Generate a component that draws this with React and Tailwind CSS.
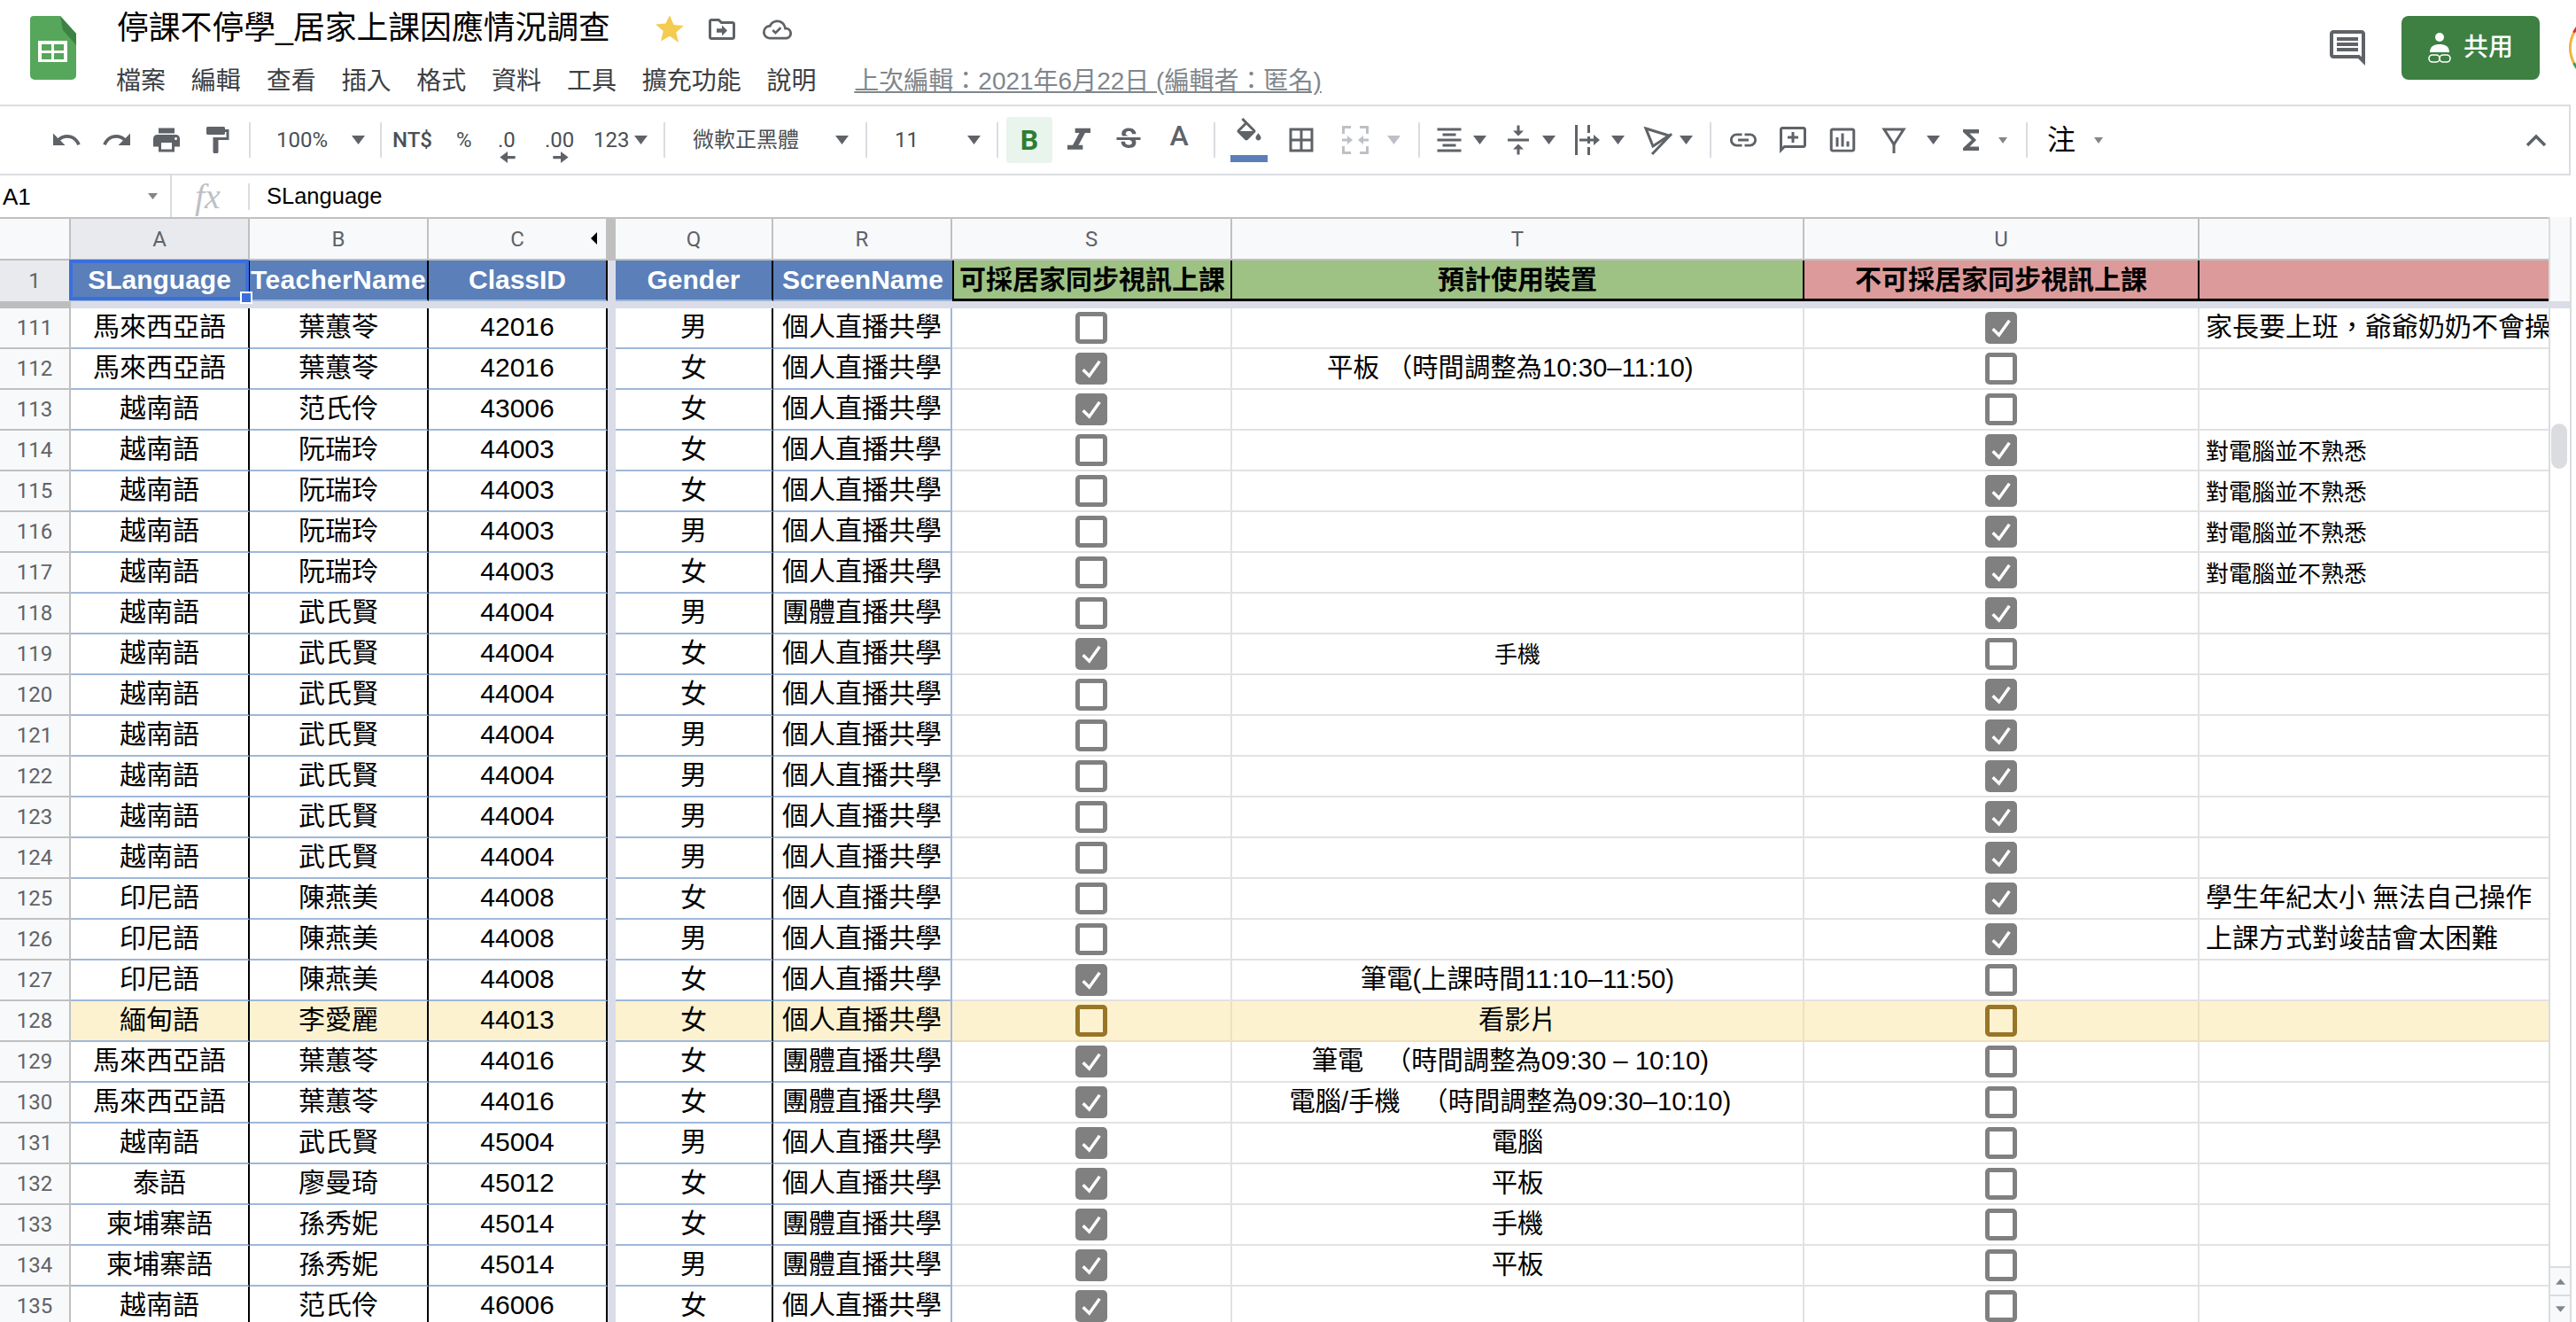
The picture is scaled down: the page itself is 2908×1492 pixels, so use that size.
import React from "react";

const G = "#5f6368";
const Icon = ({ d, size = "w-[36px] h-[36px]", fill = G }) => (
  <svg viewBox="0 0 24 24" className={`${size} shrink-0`} fill={fill}><path d={d} /></svg>
);
const P = {
  undo: "M12.5 8c-2.65 0-5.05.99-6.9 2.6L2 7v9h9l-3.62-3.62c1.39-1.16 3.16-1.88 5.12-1.88 3.54 0 6.55 2.31 7.6 5.5l2.37-.78C21.08 11.03 17.15 8 12.5 8z",
  redo: "M18.4 10.6C16.55 8.99 14.15 8 11.5 8c-4.65 0-8.58 3.03-9.96 7.22L3.9 16c1.05-3.19 4.05-5.5 7.6-5.5 1.95 0 3.73.72 5.12 1.88L13 16h9V7l-3.6 3.6z",
  print: "M19 8H5c-1.66 0-3 1.34-3 3v6h4v4h12v-4h4v-6c0-1.66-1.34-3-3-3zm-3 11H8v-5h8v5zm3-7c-.55 0-1-.45-1-1s.45-1 1-1 1 .45 1 1-.45 1-1 1zm-1-9H6v4h12V3z",
  paint: "M18 4V3c0-.55-.45-1-1-1H5c-.55 0-1 .45-1 1v4c0 .55.45 1 1 1h12c.55 0 1-.45 1-1V6h1v4H9v11c0 .55.45 1 1 1h2c.55 0 1-.45 1-1v-9h8V4h-3z",
  italic: "M10 4v3h2.21l-3.42 8H6v3h8v-3h-2.21l3.42-8H18V4z",
  fill: "M16.56 8.94L7.62 0 6.21 1.41l2.38 2.38-5.15 5.15c-.59.59-.59 1.54 0 2.12l5.5 5.5c.29.29.68.44 1.06.44s.77-.15 1.06-.44l5.5-5.5c.59-.58.59-1.53 0-2.12zM5.21 10L10 5.21 14.79 10H5.21zM19 11.5s-2 2.17-2 3.5c0 1.1.9 2 2 2s2-.9 2-2c0-1.33-2-3.5-2-3.5z",
  borders: "M3 3v18h18V3H3zm8 16H5v-6h6v6zm0-8H5V5h6v6zm8 8h-6v-6h6v6zm0-8h-6V5h6v6z",
  align: "M7 15v2h10v-2H7zm-4 6h18v-2H3v2zm0-8h18v-2H3v2zm4-6v2h10V7H7zM3 3v2h18V3H3z",
  valign: "M8 19h3v4h2v-4h3l-4-4-4 4zm8-14h-3V1h-2v4H8l4 4 4-4zM4 11v2h16v-2H4z",
  link: "M3.9 12c0-1.71 1.39-3.1 3.1-3.1h4V7H7c-2.76 0-5 2.24-5 5s2.24 5 5 5h4v-1.9H7c-1.71 0-3.1-1.39-3.1-3.1zM8 13h8v-2H8v2zm9-6h-4v1.9h4c1.71 0 3.1 1.39 3.1 3.1s-1.39 3.1-3.1 3.1h-4V17h4c2.76 0 5-2.24 5-5s-2.24-5-5-5z",
  cadd: "M20 2H4c-1.1 0-2 .9-2 2v18l4-4h14c1.1 0 2-.9 2-2V4c0-1.1-.9-2-2-2zm0 14H5.17L4 17.17V4h16v12zM11 14h2v-3h3V9h-3V6h-2v3H8v2h3z",
  chart: "M9 17H7v-7h2v7zm4 0h-2V7h2v10zm4 0h-2v-4h2v4zm2.5 2.1h-15V5h15v14.1zm0-16.1h-15c-1.1 0-2 .9-2 2v14c0 1.1.9 2 2 2h15c1.1 0 2-.9 2-2V5c0-1.1-.9-2-2-2z",
  sigma: "M18 4H6v2l6.5 6L6 18v2h12v-3h-7l5-5-5-5h7z",
  chat: "M22 4c0-1.1-.9-2-2-2H4c-1.1 0-2 .9-2 2v12c0 1.1.9 2 2 2h14l4 4V4zm-2 13.17L18.83 16H4V4h16v13.17zM6 12h12v2H6zm0-3h12v2H6zm0-3h12v2H6z",
  strike: "M7.24 8.75c-.26-.48-.39-1.03-.39-1.67 0-.61.13-1.16.4-1.67.26-.5.63-.93 1.11-1.29.48-.35 1.05-.63 1.7-.83.66-.19 1.39-.29 2.18-.29.81 0 1.54.11 2.21.34.66.22 1.23.54 1.69.94.47.4.83.88 1.08 1.43.25.55.38 1.15.38 1.81h-3.01c0-.31-.05-.59-.15-.85-.09-.27-.24-.49-.44-.68-.2-.19-.45-.33-.75-.44-.3-.1-.66-.16-1.06-.16-.39 0-.74.04-1.03.13-.29.09-.53.21-.72.36-.19.16-.34.34-.44.55-.1.21-.15.43-.15.66 0 .48.25.88.74 1.21.38.25.77.48 1.41.7H7.39c-.05-.08-.11-.17-.15-.25zM21 12v-2H3v2h9.62c.18.07.4.14.55.2.37.17.66.34.87.51.21.17.35.36.43.57.07.2.11.43.11.69 0 .23-.05.45-.14.66-.09.2-.23.38-.42.53-.19.15-.42.26-.71.35-.29.08-.63.13-1.01.13-.43 0-.83-.04-1.18-.13s-.66-.23-.91-.42c-.25-.19-.45-.44-.59-.75-.14-.31-.25-.76-.25-1.21H6.4c0 .55.08 1.13.24 1.58.16.45.37.85.65 1.21.28.35.6.66.98.92.37.26.78.48 1.22.65.44.17.9.3 1.38.39.48.08.96.13 1.44.13.8 0 1.53-.09 2.18-.28s1.21-.45 1.67-.79c.46-.34.82-.77 1.07-1.27s.38-1.07.38-1.71c0-.6-.1-1.14-.31-1.61-.05-.11-.11-.23-.17-.33H21z",
};

const Caret = ({ cls = "w-[15px] h-[10px]", fill = G }) => (
  <svg viewBox="0 0 10 6" preserveAspectRatio="none" className={`${cls} shrink-0`} fill={fill}><polygon points="0,0 10,0 5,6" /></svg>
);
const Sep = ({ ml }) => <div className={`${ml} w-[2px] h-[40px] shrink-0 bg-[#dadce0]`} />;

const Wrapped = ({ ml }) => (
  <svg viewBox="0 0 36 36" className={`${ml} w-[36px] h-[36px] shrink-0`} fill={G}>
    <rect x="4" y="1" width="3" height="34" />
    <rect x="18" y="1" width="3" height="9" /><rect x="18" y="14" width="3" height="8" /><rect x="18" y="26" width="3" height="9" />
    <rect x="9" y="16.5" width="16" height="3" /><polygon points="25,12 32,18 25,24" />
  </svg>
);
const Rotate = ({ ml }) => (
  <svg viewBox="0 0 36 36" className={`${ml} w-[36px] h-[36px] shrink-0`} fill="none" stroke={G} strokeWidth="3">
    <polygon points="4,5 30,13 12,25" /><line x1="33" y1="11" x2="11" y2="34" />
  </svg>
);
const Merge = ({ ml }) => (
  <svg viewBox="0 0 36 36" className={`${ml} w-[36px] h-[36px] shrink-0`} fill="#bdc1c6">
    <path d="M3 2h10v3H6v6H3zM23 2h10v9h-3V5h-7zM3 25h3v6h7v3H3zM30 25h3v9H23v-3h7z" />
    <path d="M3 16.5h6V13l6 5-6 5v-3.5H3zM33 16.5h-6V13l-6 5 6 5v-3.5h6z" />
  </svg>
);
const Funnel = ({ ml }) => (
  <svg viewBox="0 0 36 36" className={`${ml} w-[36px] h-[36px] shrink-0`} fill="none" stroke={G} strokeWidth="3">
    <polygon points="7,6 29,6 18,23" /><line x1="18" y1="22" x2="18" y2="33" />
  </svg>
);
const Arrow = ({ right }) => (
  <svg viewBox="0 0 16 12" className="absolute left-1/2 -translate-x-1/2 top-[25px] w-[18px] h-[13px]" fill={G}>
    {right ? <polygon points="0,4.5 8,4.5 8,0 16,6 8,12 8,7.5 0,7.5" /> : <polygon points="16,4.5 8,4.5 8,0 0,6 8,12 8,7.5 16,7.5" />}
  </svg>
);

function TopBar() {
  const menus = ["檔案", "編輯", "查看", "插入", "格式", "資料", "工具", "擴充功能", "說明"];
  return (
    <header className="h-[118px] flex shrink-0 pl-[34px] pt-[18px]">
      <svg viewBox="0 0 52 72" className="w-[52px] h-[72px] shrink-0">
        <path d="M4 0h30l18 20v47a5 5 0 0 1-5 5H5a5 5 0 0 1-5-5V4a4 4 0 0 1 4-4z" fill="#56a65c" />
        <path d="M34 0L52 20V33L37 16z" fill="#3d8144" />
        <path d="M9 28h33v24H9zM13 32h11v7H13zM27 32h11v7H27zM13 42h11v7H13zM27 42h11v7H27z" fill="#fff" fillRule="evenodd" />
      </svg>
      <div className="ml-[45px] flex flex-col">
        <div className="flex items-center h-[38px] -mt-[4px] text-[35.8px] leading-none text-black">
          <span className="ml-[1px]">停課不停學_居家上課因應情況調查</span>
          <svg viewBox="0 0 24 24" className="ml-[48px] w-[38px] h-[38px] shrink-0" fill="#f5cb50"><path d="M12 2l2.9 6.9 7.1.6-5.4 4.7 1.7 7.3L12 16.9l-6.3 3.6 1.7-7.3L2 8.5l7.1-.6z" /></svg>
          <svg viewBox="0 0 24 24" className="ml-[22px] w-[36px] h-[36px] shrink-0" fill={G}><path d="M20 6h-8l-2-2H4c-1.1 0-2 .9-2 2v12c0 1.1.9 2 2 2h16c1.1 0 2-.9 2-2V8c0-1.1-.9-2-2-2zm0 12H4V6h5.17l2 2H20v10zm-8-1l4-4-4-4v2.5H8v3h4z" /></svg>
          <svg viewBox="0 0 24 24" className="ml-[28px] w-[33px] h-[33px] shrink-0" fill={G}><path d="M19.35 10.04A7.49 7.49 0 0 0 12 4C9.11 4 6.6 5.64 5.35 8.04A5.994 5.994 0 0 0 0 14c0 3.31 2.69 6 6 6h13c2.76 0 5-2.24 5-5 0-2.64-2.05-4.78-4.65-4.96zM19 18H6c-2.21 0-4-1.79-4-4 0-2.05 1.53-3.76 3.56-3.97l1.07-.11.5-.95A5.469 5.469 0 0 1 12 6c2.62 0 4.88 1.86 5.39 4.43l.3 1.5 1.53.11A2.98 2.98 0 0 1 22 15c0 1.65-1.35 3-3 3zm-8.5-2l-3-3 1.4-1.4 1.6 1.6 3.6-3.6 1.4 1.4z" /></svg>
        </div>
        <div className="mt-[25px] flex items-center text-[28px] leading-none text-[#3c4043] h-[30px]">
          {menus.map((m) => (
            <span key={m} className="mr-[28.8px]">{m}</span>
          ))}
          <span className="ml-[14px] text-[28px] text-[#80868b] underline">上次編輯：2021年6月22日 (編輯者：匿名)</span>
        </div>
      </div>
      <div className="ml-auto flex items-start shrink-0">
        <Icon d={P.chat} size="w-[48px] h-[48px] mt-[12px]" />
        <div className="ml-[37px] w-[156px] h-[72px] rounded-[8px] bg-[#3e7f42] flex items-center justify-center text-white text-[28px] font-medium">
          <svg viewBox="0 0 26 34" className="w-[26px] h-[34px] mr-[14px] shrink-0">
            <circle cx="13" cy="5" r="5" fill="#fff" />
            <path d="M2 22c0-7 5-9 11-9s11 2 11 9z" fill="#fff" />
            <g fill="none" stroke="#fff" strokeWidth="1.6"><rect x="1" y="25" width="12" height="8" rx="4" /><rect x="13" y="25" width="12" height="8" rx="4" /></g>
          </svg>
          <span>共用</span>
        </div>
        <div className="ml-[33px] w-[8px] h-[80px] -mt-[4px] overflow-hidden shrink-0">
          <svg viewBox="0 0 80 80" className="w-[80px] h-[80px] max-w-none" fill="none" strokeWidth="3">
            <path d="M9.9 16A38.5 38.5 0 0 0 5.5 23" stroke="#d93025" />
            <path d="M5.5 23A38.5 38.5 0 0 0 5.5 57" stroke="#f0b441" />
            <path d="M5.5 57A38.5 38.5 0 0 0 9.9 64" stroke="#3f9a57" />
          </svg>
        </div>
      </div>
    </header>
  );
}

function Toolbar() {
  const txt = "shrink-0 leading-none text-[24px] text-[#4b4f54] font-['Roboto','Noto_Sans_CJK_TC',sans-serif] whitespace-nowrap";
  return (
    <div className="w-[2902px] h-[80px] shrink-0 border-y-2 border-r-2 border-[#dadce0] flex items-center pl-[57px]">
      <Icon d={P.undo} />
      <div className="ml-[21px]"><Icon d={P.redo} /></div>
      <div className="ml-[20px]"><Icon d={P.print} /></div>
      <div className="ml-[21px]"><Icon d={P.paint} /></div>
      <Sep ml="ml-[18px]" />
      <span className={`${txt} ml-[29px] w-[58px]`}>100%</span>
      <div className="ml-[27px]"><Caret /></div>
      <Sep ml="ml-[17px]" />
      <span className={`${txt} ml-[12px] w-[47px] font-medium`}>NT$</span>
      <span className={`${txt} ml-[25px] w-[20px]`}>%</span>
      <span className={`${txt} ml-[27px] w-[22px] relative`}>.0<Arrow /></span>
      <span className={`${txt} ml-[31px] w-[36px] relative`}>.00<Arrow right /></span>
      <span className={`${txt} ml-[19px] w-[40px]`}>123</span>
      <div className="ml-[6px]"><Caret /></div>
      <Sep ml="ml-[18px]" />
      <span className={`${txt} ml-[31px] w-[120px]`}>微軟正黑體</span>
      <div className="ml-[41px]"><Caret /></div>
      <Sep ml="ml-[19px]" />
      <span className={`${txt} ml-[31px] w-[22px]`}>11</span>
      <div className="ml-[60px]"><Caret /></div>
      <Sep ml="ml-[18px]" />
      <div className="ml-[9px] w-[52px] h-[52px] rounded-[4px] bg-[#e9f4ec] flex items-center justify-center shrink-0 text-[#2e7d32] text-[32px] font-bold font-['Roboto',sans-serif] leading-none">B</div>
      <div className="ml-[12px] w-[36px] h-[36px] flex items-center justify-center shrink-0">
        <svg viewBox="0 0 24 24" preserveAspectRatio="none" className="w-[52px] h-[41px] shrink-0" fill={G}><path d={P.italic} /></svg>
      </div>
      <div className="ml-[20px]"><Icon d={P.strike} /></div>
      <div className="ml-[21px] w-[36px] shrink-0 text-center text-[32px] leading-none font-medium text-[#5f6368] font-['Roboto',sans-serif] -mt-[10px]">A</div>
      <Sep ml="ml-[21px]" />
      <div className="ml-[17px] w-[42px] h-[50px] shrink-0 flex flex-col items-center">
        <Icon d={P.fill} size="w-[36px] h-[36px]" />
        <div className="mt-[6px] w-[42px] h-[8px] bg-[#5a7fb9]" />
      </div>
      <div className="ml-[20px]"><Icon d={P.borders} /></div>
      <Merge ml="ml-[25px]" />
      <div className="ml-[18px]"><Caret fill="#bdc1c6" /></div>
      <Sep ml="ml-[20px]" />
      <div className="ml-[15px]"><Icon d={P.align} /></div>
      <div className="ml-[9px]"><Caret /></div>
      <div className="ml-[18px]"><Icon d={P.valign} /></div>
      <div className="ml-[9px]"><Caret /></div>
      <Wrapped ml="ml-[18px]" />
      <div className="ml-[9px]"><Caret /></div>
      <Rotate ml="ml-[20px]" />
      <div className="ml-[6px]"><Caret /></div>
      <Sep ml="ml-[19px]" />
      <div className="ml-[18px]"><Icon d={P.link} /></div>
      <div className="ml-[20px]"><Icon d={P.cadd} /></div>
      <div className="ml-[20px]"><Icon d={P.chart} /></div>
      <Funnel ml="ml-[22px]" />
      <div className="ml-[19px]"><Caret /></div>
      <div className="ml-[17px]"><Icon d={P.sigma} /></div>
      <div className="ml-[13px]"><Caret cls="w-[10px] h-[7px]" fill="#80868b" /></div>
      <Sep ml="ml-[21px]" />
      <span className="ml-[22px] w-[32px] text-[32px] leading-none text-black shrink-0">注</span>
      <div className="ml-[21px]"><Caret cls="w-[10px] h-[7px]" fill="#80868b" /></div>
      <svg viewBox="0 0 24 14" className="ml-auto mr-[25px] w-[24px] h-[14px] shrink-0" fill="none" stroke={G} strokeWidth="3.5"><polyline points="2,13 12,3 22,13" /></svg>
    </div>
  );
}

function FormulaBar() {
  return (
    <div className="h-[47px] shrink-0 flex items-center text-[26px] leading-none text-black">
      <span className="ml-[3px] w-[164px]">A1</span>
      <Caret cls="w-[11px] h-[7px]" fill="#80868b" />
      <div className="ml-[14px] w-[2px] h-full bg-[#dadce0]" />
      <span className="ml-[26px] w-[39px] font-['Liberation_Serif',serif] italic text-[40px] text-[#bdc1c6]">fx</span>
      <div className="ml-[21px] w-[2px] h-[30px] bg-[#dadce0]" />
      <span className="ml-[19px] text-[25.5px]">SLanguage</span>
    </div>
  );
}

const letterCls = "h-full flex items-center justify-center border-r-2 border-[#c0c0c0] text-[24px] text-[#5f6368] font-['Roboto',sans-serif] shrink-0";
function ColumnHeader() {
  return (
    <div className="h-[49px] flex shrink-0 bg-[#f8f9fa] border-y-2 border-[#c0c0c0]">
      <div className="w-[80px] h-full border-r-2 border-[#c0c0c0] shrink-0" />
      <div className={`${letterCls} w-[202px] bg-[#e8eaed]`}>A</div>
      <div className={`${letterCls} w-[202px]`}>B</div>
      <div className={`${letterCls} w-[202px] relative`}>C
        <svg viewBox="0 0 9 18" className="absolute right-[9px] top-[15px] w-[9px] h-[14px]" fill="#000"><polygon points="9,0 9,18 0,9" /></svg>
      </div>
      <div className="w-[9px] h-full bg-[#bfbfbf] shrink-0" />
      <div className={`${letterCls} w-[178px]`}>Q</div>
      <div className={`${letterCls} w-[202px]`}>R</div>
      <div className={`${letterCls} w-[316px]`}>S</div>
      <div className={`${letterCls} w-[646px]`}>T</div>
      <div className={`${letterCls} w-[446px]`}>U</div>
      <div className="w-[394px] h-full shrink-0" />
    </div>
  );
}

const hBlue = "h-full flex items-center justify-center bg-[#5a7fb9] text-white border-r-2 border-black border-b-2 border-b-[#9fb7d9] shrink-0 whitespace-nowrap";
function HeaderRow() {
  return (
    <div className="h-[46px] flex shrink-0 text-[30px] font-bold leading-none">
      <div className="w-[80px] h-full bg-[#e8eaed] border-r-2 border-[#c0c0c0] flex items-center justify-center text-[24px] font-normal text-[#5f6368] font-['Roboto',sans-serif] shrink-0">1</div>
      <div className={`${hBlue} w-[202px] relative`}>
        SLanguage
        <div className="absolute -left-[2px] -top-[1px] -right-[1px] bottom-[-1px] border-[4px] border-[#3b6fdc]" />
        <div className="absolute -right-[5px] -bottom-[5px] w-[14px] h-[14px] bg-[#3b6fdc] border-2 border-white z-10" />
      </div>
      <div className={`${hBlue} w-[202px] tracking-[0.3px]`}>TeacherName</div>
      <div className={`${hBlue} w-[202px]`}>ClassID</div>
      <div className="w-[9px] h-full bg-[#dadde8] shrink-0" />
      <div className={`${hBlue} w-[178px]`}>Gender</div>
      <div className={`${hBlue} w-[202px] !border-r-0`}>ScreenName</div>
      <div className="w-[316px] h-full flex items-center justify-center bg-[#9ec283] text-black border-x-2 border-b-[3px] border-black shrink-0 whitespace-nowrap">可採居家同步視訊上課</div>
      <div className="w-[646px] h-full flex items-center justify-center bg-[#9ec283] text-black border-r-2 border-b-[3px] border-black shrink-0">預計使用裝置</div>
      <div className="w-[446px] h-full flex items-center justify-center bg-[#dd9a9a] text-black border-r-2 border-b-[3px] border-black shrink-0">不可採居家同步視訊上課</div>
      <div className="w-[394px] h-full bg-[#dd9a9a] border-b-[3px] border-black shrink-0" />
    </div>
  );
}

function Check({ on, warm }) {
  if (warm) return <div className="w-[36px] h-[36px] rounded-[5px] border-[5px] border-[#987626]" />;
  if (!on) return <div className="w-[36px] h-[36px] rounded-[5px] border-[5px] border-[#808080] bg-white" />;
  return (
    <div className="w-[36px] h-[36px] rounded-[5px] bg-[#808080] flex items-center justify-center">
      <svg viewBox="0 0 24 24" className="w-[28px] h-[28px]" fill="none" stroke="#fff" strokeWidth="3"><polyline points="4,13 10,19 20,5" /></svg>
    </div>
  );
}

const M = "馬來西亞語", V = "越南語", I = "印尼語";
const A = "個人直播共學", B = "團體直播共學";
const small = "對電腦並不熟悉";
const rows = [
  [111, M, "葉蕙苓", "42016", "男", A, 0, "", 1, "家長要上班，爺爺奶奶不會操"],
  [112, M, "葉蕙苓", "42016", "女", A, 1, "平板 （時間調整為10:30–11:10)\u00a0\u00a0", 0, ""],
  [113, V, "范氏伶", "43006", "女", A, 1, "", 0, ""],
  [114, V, "阮瑞玲", "44003", "女", A, 0, "", 1, small],
  [115, V, "阮瑞玲", "44003", "女", A, 0, "", 1, small],
  [116, V, "阮瑞玲", "44003", "男", A, 0, "", 1, small],
  [117, V, "阮瑞玲", "44003", "女", A, 0, "", 1, small],
  [118, V, "武氏賢", "44004", "男", B, 0, "", 1, ""],
  [119, V, "武氏賢", "44004", "女", A, 1, "手機", 0, ""],
  [120, V, "武氏賢", "44004", "女", A, 0, "", 1, ""],
  [121, V, "武氏賢", "44004", "男", A, 0, "", 1, ""],
  [122, V, "武氏賢", "44004", "男", A, 0, "", 1, ""],
  [123, V, "武氏賢", "44004", "男", A, 0, "", 1, ""],
  [124, V, "武氏賢", "44004", "男", A, 0, "", 1, ""],
  [125, I, "陳燕美", "44008", "女", A, 0, "", 1, "學生年紀太小 無法自己操作"],
  [126, I, "陳燕美", "44008", "男", A, 0, "", 1, "上課方式對竣喆會太困難"],
  [127, I, "陳燕美", "44008", "女", A, 1, "筆電(上課時間11:10–11:50)", 0, ""],
  [128, "緬甸語", "李愛麗", "44013", "女", A, 0, "看影片", 0, ""],
  [129, M, "葉蕙苓", "44016", "女", B, 1, "筆電\u00a0\u00a0\u00a0（時間調整為09:30 – 10:10)\u00a0\u00a0", 0, ""],
  [130, M, "葉蕙苓", "44016", "女", B, 1, "電腦/手機\u00a0\u00a0\u00a0（時間調整為09:30–10:10)\u00a0\u00a0", 0, ""],
  [131, V, "武氏賢", "45004", "男", A, 1, "電腦", 0, ""],
  [132, "泰語", "廖曼琦", "45012", "女", A, 1, "平板", 0, ""],
  [133, "柬埔寨語", "孫秀妮", "45014", "女", B, 1, "手機", 0, ""],
  [134, "柬埔寨語", "孫秀妮", "45014", "男", B, 1, "平板", 0, ""],
  [135, V, "范氏伶", "46006", "女", A, 1, "", 0, ""],
];

const cBlack = "h-full flex items-center justify-center border-r-2 border-black border-b-2 border-b-[#9fb7d9] shrink-0 whitespace-nowrap text-[30px] pb-[2px]";
const cGray = "h-full flex items-center justify-center border-r-2 border-b-2 border-[#e2e2e2] shrink-0 whitespace-nowrap";
const cWarm = "h-full flex items-center justify-center border-r-2 border-b-2 border-[#efe0bd] shrink-0 whitespace-nowrap";

function Row({ r }) {
  const [n, a, b, c, q, sn, s, t, u, v] = r;
  const warm = n === 128;
  const g = warm ? cWarm : cGray;
  const smallT = t === "手機" && n === 119;
  return (
    <div className={warm ? "h-[46px] flex shrink-0 bg-[#fdf2d0]" : "h-[46px] flex shrink-0 bg-white"}>
      <div className="w-[80px] h-full bg-[#f8f9fa] border-r-2 border-b-2 border-[#c0c0c0] flex items-center justify-center text-[24px] text-[#5f6368] font-['Roboto',sans-serif] shrink-0">{n}</div>
      <div className={`${cBlack} w-[202px]`}>{a}</div>
      <div className={`${cBlack} w-[202px]`}>{b}</div>
      <div className={`${cBlack} w-[202px]`}>{c}</div>
      <div className="w-[9px] h-full bg-[#dadde8] shrink-0" />
      <div className={`${cBlack} w-[178px]`}>{q}</div>
      <div className={`${cBlack} w-[202px] border-r-[#9fb7d9]`}>{sn}</div>
      <div className={`${g} w-[316px]`}><Check on={s} warm={warm} /></div>
      <div className={`${g} w-[646px] ${smallT ? "text-[26px] pt-[2px]" : "pb-[2px]"}`}>{t}</div>
      <div className={`${g} w-[446px]`}><Check on={u} warm={warm} /></div>
      <div className={`${g} w-[394px] !justify-start !border-r-0 pl-[7px] overflow-hidden ${v === small ? "text-[26px] pt-[4px]" : "text-[30px] pb-[2px]"}`}>{v}</div>
    </div>
  );
}

function Scrollbar() {
  return (
    <div className="w-[26px] shrink-0 flex flex-col border-x-2 border-[#dadce0] h-full">
      <div className="h-[95px] bg-[#f8f9fa] shrink-0" />
      <div className="h-[8px] bg-[#dadde8] shrink-0" />
      <div className="flex-1 min-h-0">
        <div className="mt-[130px] ml-[1px] w-[18px] h-[51px] rounded-full bg-[#dadce0]" />
      </div>
      <div className="h-[32px] shrink-0 bg-[#f8f9fa] border-t-2 border-[#dadce0] flex items-center justify-center">
        <svg viewBox="0 0 10 6" className="w-[11px] h-[7px]" fill="#80868b"><polygon points="0,6 10,6 5,0" /></svg>
      </div>
      <div className="h-[31px] shrink-0 bg-[#f8f9fa] border-t-2 border-[#dadce0] flex items-center justify-center">
        <svg viewBox="0 0 10 6" className="w-[11px] h-[7px]" fill="#80868b"><polygon points="0,0 10,0 5,6" /></svg>
      </div>
    </div>
  );
}

export default function App() {
  return (
    <div className="w-[2908px] h-[1492px] overflow-hidden bg-white flex flex-col font-['Liberation_Sans','Noto_Sans_CJK_TC',sans-serif] text-[29.33px] leading-none text-black">
      <TopBar />
      <Toolbar />
      <FormulaBar />
      <div className="flex-1 min-h-0 flex">
        <div className="w-[2877px] shrink-0 flex flex-col overflow-hidden">
          <ColumnHeader />
          <HeaderRow />
          <div className="h-[8px] shrink-0 flex">
            <div className="w-[80px] bg-[#bdbdbd]" />
            <div className="flex-1 bg-[#dadde8]" />
          </div>
          {rows.map((r) => <Row key={r[0]} r={r} />)}
        </div>
        <Scrollbar />
      </div>
    </div>
  );
}
